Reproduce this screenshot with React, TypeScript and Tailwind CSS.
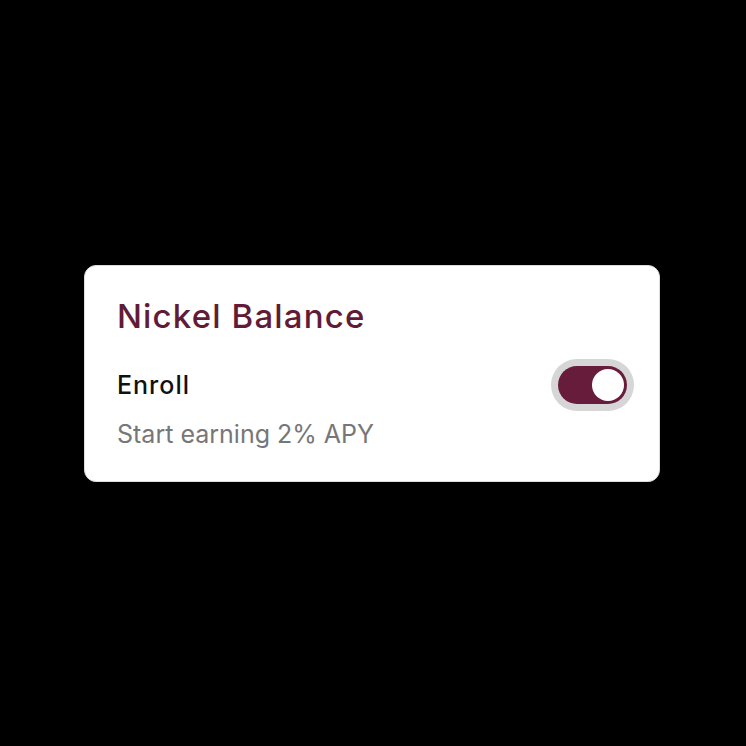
export default function App() {
  return (
    <div className="flex h-[746px] w-[746px] items-center justify-center bg-black" style={{ fontFamily: "Inter, 'Noto Sans', sans-serif" }}>
      <div className="mr-[2px] flex w-[576px] flex-col rounded-xl border border-[#dcdcdc] bg-white px-8 pb-[31px] pt-[30px]">
        <h1 className="text-[33px] leading-[40px] font-medium tracking-[0.035em] text-[#621b37]">Nickel Balance</h1>
        <div className="mt-[23px] flex items-center justify-between">
          <span className="text-[25px] font-medium leading-[32px] tracking-[0.04em] text-[#111]">Enroll</span>
          <button
            type="button"
            aria-pressed="true"
            className="-mr-[7px] flex h-[52px] w-[83px] items-center rounded-full bg-[#d6d6d6] p-[7px]"
          >
            <span className="flex h-full w-full items-center justify-end rounded-full bg-[#681c3b] pr-[3px]">
              <span className="h-[32px] w-[32px] rounded-full bg-white" />
            </span>
          </button>
        </div>
        <p className="mt-[7px] text-[25px] leading-[32px] text-[#777]">Start earning 2% APY</p>
      </div>
    </div>
  );
}
